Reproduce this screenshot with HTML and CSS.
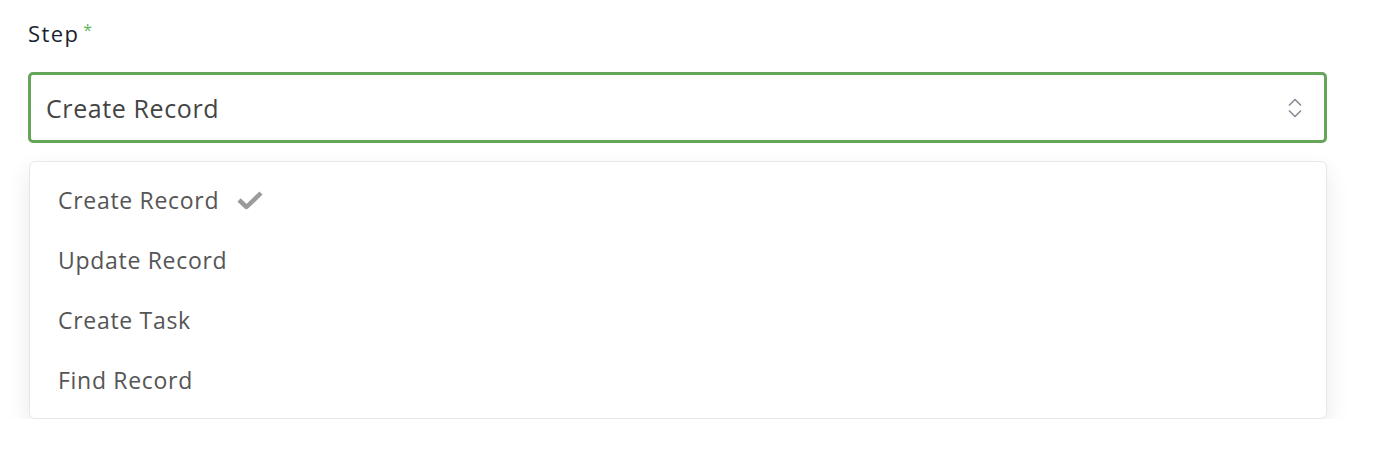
FILE: index.html
```html
<!DOCTYPE HTML>
<html lang="en">
  <head>
    <title>Step</title>
    <meta charset="UTF-8" name="viewport" content="width=device-width, initial-scale=1.0" />
    <link rel="stylesheet" href="styles.css">
  </head>
  <body>
    <div class="field">
      <label class="label">Step<span class="req">*</span></label>

      <div class="select">
        <span class="value">Create Record</span>
        <svg class="chev" width="16" height="24" viewBox="0 0 16 24">
          <path d="M2.5 9 L8 3.5 L13.5 9" fill="none" stroke="#8a8f99" stroke-width="1.7" stroke-linecap="round" stroke-linejoin="round"/>
          <path d="M2.5 15 L8 20.5 L13.5 15" fill="none" stroke="#8a8f99" stroke-width="1.7" stroke-linecap="round" stroke-linejoin="round"/>
        </svg>
      </div>

      <ul class="menu">
        <li class="item">Create Record
          <svg class="check" width="26" height="20" viewBox="0 0 26 20">
            <path d="M2 10 L9.5 17 L24 3" fill="none" stroke="#9b9b9b" stroke-width="4.5" stroke-linejoin="round"/>
          </svg>
        </li>
        <li class="item">Update Record</li>
        <li class="item">Create Task</li>
        <li class="item">Find Record</li>
      </ul>
    </div>
  </body>
</html>
```

FILE: styles.css
```css
body {
  margin: 0;
  background: #FFFFFF;
  font-family: "Open Sans", sans-serif;
}

.field {
  width: 1299px;
  padding: 18px 0 0 28px;
}

.label {
  display: block;
  color: #1a1f2e;
  font-size: 22px;
  font-weight: 500;
  letter-spacing: 1.4px;
  line-height: 31px;
  height: 30px;
}

.req {
  color: #5fb760;
  font-size: 16px;
  letter-spacing: 0;
  vertical-align: top;
  margin-left: 4px;
  position: relative;
  top: -3px;
}

.select {
  margin-top: 24px;
  height: 65px;
  border: 3px solid #64a55a;
  border-radius: 5px;
  display: flex;
  align-items: center;
  justify-content: space-between;
  padding: 0 21px 0 15px;
}

.value {
  color: #444;
  font-size: 25px;
  letter-spacing: 0.6px;
}

.chev {
  display: block;
}

.menu {
  list-style: none;
  margin: 18px 0 0 1px;
  padding: 8px 0;
  border: 1px solid #e6e6ec;
  border-radius: 6px;
  box-shadow: 0 10px 24px rgba(0, 0, 0, 0.09);
}

.item {
  height: 60px;
  display: flex;
  align-items: center;
  padding-left: 28px;
  color: #555;
  font-size: 23px;
  letter-spacing: 0.7px;
}

.check {
  margin-left: 18px;
}
```
